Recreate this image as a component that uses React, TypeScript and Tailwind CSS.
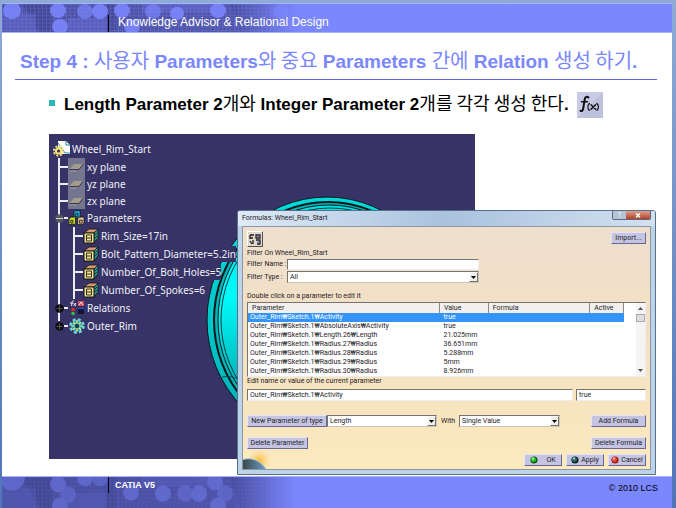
import type { ReactNode } from 'react';
import { clsx } from 'clsx';

const planes = ['xy plane', 'yz plane', 'zx plane'];

const treeParameters = [
  'Rim_Size=17in',
  'Bolt_Pattern_Diameter=5.2in',
  'Number_Of_Bolt_Holes=5',
  'Number_Of_Spokes=6',
];

const formulaRows = [
  { name: 'Outer_Rim₩Sketch.1₩Activity', value: 'true' },
  { name: 'Outer_Rim₩Sketch.1₩AbsoluteAxis₩Activity', value: 'true' },
  { name: 'Outer_Rim₩Sketch.1₩Length.26₩Length', value: '21.025mm' },
  { name: 'Outer_Rim₩Sketch.1₩Radius.27₩Radius', value: '36.651mm' },
  { name: 'Outer_Rim₩Sketch.1₩Radius.28₩Radius', value: '5.288mm' },
  { name: 'Outer_Rim₩Sketch.1₩Radius.29₩Radius', value: '5mm' },
  { name: 'Outer_Rim₩Sketch.1₩Radius.30₩Radius', value: '8.926mm' },
];

// Dots over the banner, shared by the header and the footer
const headerDots = [
  [10, 7, 9], [56, 7, 8], [83, 8, 8], [98, 8, 8], [120, 7, 8], [151, 8, 8],
  [175, 10, 7], [216, 7, 8], [279, 8, 8], [58, 24, 8], [130, 24, 8],
];
const footerDots = [
  [10, 0, 13], [56, 7, 8], [66, 17, 8], [58, 28, 8], [83, 1, 8], [98, 1, 8],
  [129, 15, 8], [161, 16, 8], [183, 16, 8], [197, 16, 8], [213, 5, 8], [223, 16, 8], [216, 28, 8],
];

function Banner({ id, dots, base, dot }: { id: string; dots: number[][]; base: string; dot: string }) {
  return (
    <svg className="absolute inset-y-0 left-0 h-full w-[320px]" viewBox="0 0 320 30" preserveAspectRatio="none" aria-hidden="true">
      <defs>
        <linearGradient id={`${id}-fade`}>
          <stop offset="0" stopColor="#fff" />
          <stop offset="0.72" stopColor="#fff" stopOpacity="0.9" />
          <stop offset="0.92" stopColor="#fff" stopOpacity="0" />
        </linearGradient>
        <pattern id={`${id}-grid`} width="4" height="4" patternUnits="userSpaceOnUse">
          <path d="M0 .5H4M.5 0V4" stroke={dot} strokeOpacity="0.25" />
        </pattern>
        <mask id={`${id}-mask`}>
          <rect width="320" height="30" fill={`url(#${id}-fade)`} />
        </mask>
      </defs>
      <g mask={`url(#${id}-mask)`}>
        <rect width="320" height="30" fill={base} />
        <path d="M20 0h30v30h-12zM104 0h10v30h-10zM228 0h40v30h-30z" fill="#3f438a" fillOpacity="0.6" />
        <path d="M0 10h34v20h-34zM66 15h38v15h-38zM140 0h70v9h-70z" fill={dot} fillOpacity="0.25" />
        <rect width="320" height="30" fill={`url(#${id}-grid)`} />
        {dots.map(([x, y, r], i) => (
          <circle key={i} cx={x} cy={y} r={r} fill={dot} fillOpacity={i % 3 === 2 ? 0.7 : 0.9} />
        ))}
      </g>
    </svg>
  );
}

function FormulaIcon() {
  return (
    <svg className="h-[26px] w-[26px] shrink-0" viewBox="0 0 26 26" role="img" aria-label="Formula">
      <rect width="26" height="26" fill="#c9cbe6" />
      <path d="M0 26 26 0V26z" fill="#b8bad8" fillOpacity="0.6" />
      <g fill="none" stroke="#111" strokeLinecap="round">
        <path d="M11.500 5.400C10 4 8.200 4.800 7.800 7L6.200 16.500c-.4 2.200-1.400 3-2.700 2.300" strokeWidth="2" />
        <path d="M4.500 9.700h6" strokeWidth="1.500" />
        <path d="M12.300 11.500c-1.800 2-1.800 5 0 6.800M20 11.500c1.800 2 1.800 5 0 6.800" strokeWidth="1.300" />
        <path d="M14 12.700l4.600 4.600M18.600 12.700l-4.600 4.600" strokeWidth="1.500" />
      </g>
    </svg>
  );
}

function PlaneIcon() {
  return (
    <svg className="h-[17px] w-[17px] shrink-0" viewBox="0 0 17 17" aria-hidden="true">
      <rect width="17" height="17" fill="#74758f" />
      <path d="M6 6h9l-4 5H1.500z" fill="#a39b8c" />
      <path d="M1.500 11.500H11L15 6.500" fill="none" stroke="#3c3846" />
      <path d="M2 13h7" stroke="#9b97a5" />
    </svg>
  );
}

function ParameterIcon() {
  return (
    <svg className="h-4 w-4 shrink-0" viewBox="0 0 16 16" aria-hidden="true">
      <path d="M1 5 6 1h9l-4 4z" fill="#d19a72" stroke="#17120c" strokeWidth="0.800" />
      <path d="M11 5l4-4v9l-4 5z" fill="#23979b" stroke="#17120c" strokeWidth="0.800" />
      <rect x="1" y="5" width="10" height="10" fill="#efe39a" stroke="#17120c" />
      <path d="M3.500 7h5v6h-5zM3.500 10h5M12 7l2-2M12 10l2-2" fill="none" stroke="#3b3314" />
    </svg>
  );
}

function ParametersIcon() {
  return (
    <svg className="h-4 w-4 shrink-0" viewBox="0 0 17 16" aria-hidden="true">
      <g stroke="#101018" strokeWidth="0.800">
        <path d="M5 2l2-2h5v6l-1 2H5z" fill="#1f9ec9" />
        <path d="M0 9l2-2h5v6l-1 2H0z" fill="#c8d22c" />
        <path d="M9 9l2-2h5v6l-1 2H9z" fill="#e1bb92" />
      </g>
      <path d="M6.500 3.500h3v3h-3zM2 10.500h2v3H2zM11 10.500h3v3h-3z" fill="none" stroke="#26301a" />
    </svg>
  );
}

function RelationsIcon() {
  return (
    <svg className="h-4 w-4 shrink-0" viewBox="0 0 16 16" aria-hidden="true">
      <path d="M5 1C3 0 3 3 2.500 6M1 3h3M4.500 3l2.500 3M7 3 4.500 6" fill="none" stroke="#eee" />
      <rect x="9" y="1" width="6" height="5" fill="#d84a58" />
      <path d="M10 5l2-3 2 3" fill="none" stroke="#eee" />
      <circle cx="4" cy="9.500" r="1.800" fill="#e62d20" />
      <circle cx="4" cy="13.500" r="1.800" fill="#20c83c" />
      <rect x="9" y="8" width="6" height="6" fill="#14142c" />
      <path d="M9 8.500h6" stroke="#2c52ee" />
    </svg>
  );
}

function GearIcon() {
  return (
    <svg className="h-4 w-4 shrink-0" viewBox="0 0 16 16" aria-hidden="true">
      <circle cx="8" cy="8" r="6.300" fill="none" stroke="#67d9df" strokeWidth="3" strokeDasharray="2.800 2.150" />
      <circle cx="8" cy="8" r="5.200" fill="#2aa8b1" />
      <path d="M8 2v12M2 8h12M4 4l8 8M12 4l-8 8" stroke="#e4e878" strokeWidth="1.200" />
      <circle cx="8" cy="8" r="2.300" fill="#123d5c" />
    </svg>
  );
}

function RootIcon() {
  return (
    <svg className="h-[18px] w-[18px] shrink-0" viewBox="0 0 18 18" aria-hidden="true">
      <path d="M5 1h8l4 4v9H5z" fill="#fff" />
      <path d="M13 1v4h4M5 3l7 10h5" fill="none" stroke="#1b8b9c" />
      <circle cx="5.500" cy="11" r="4.600" fill="none" stroke="#f4e07a" strokeWidth="2" strokeDasharray="2 1.600" />
      <circle cx="5.500" cy="11" r="3.600" fill="#f2e07a" />
      <circle cx="5.500" cy="11" r="1.500" fill="#33245a" />
    </svg>
  );
}

function Knob({ plus }: { plus?: boolean }) {
  return (
    <svg className="h-[9px] w-[9px] shrink-0" viewBox="0 0 9 9" aria-hidden="true">
      <circle cx="4.500" cy="4.500" r="4.300" fill={plus ? '#0c0c10' : '#55565e'} />
      <path d={plus ? 'M1.500 4.500h6M4.500 1.500v6' : 'M1 4.500h7'} stroke={plus ? '#555' : '#d4d4d4'} />
    </svg>
  );
}

function TreeRow({ icon, label, className }: { icon: ReactNode; label: string; className: string }) {
  return (
    <li className={clsx('flex items-center', className)}>
      <span className="w-2 border-t-2 border-white/90" />
      {icon}
      <span className="bg-[#373366] pl-0.5 leading-4">{label}</span>
    </li>
  );
}

function BranchRow({ icon, label, plus }: { icon: ReactNode; label: string; plus?: boolean }) {
  return (
    <div className="-ml-[5px] flex h-[18px] items-center">
      <Knob plus={plus} />
      <span className="mr-px w-1 border-t-2 border-white/90" />
      {icon}
      <span className="pl-0.5">{label}</span>
    </div>
  );
}

function SpecTree() {
  return (
    <div className="relative w-fit pt-1.5 pl-1 font-['Noto_Sans','Open_Sans',sans-serif] text-[10px] whitespace-nowrap text-[#f0f0f6]">
      <div className="flex h-[18px] items-center gap-px">
        <RootIcon />
        <span>Wheel_Rim_Start</span>
      </div>
      <ul className="ml-[5px] border-l-2 border-white/90">
        {planes.map((plane) => (
          <TreeRow key={plane} icon={<PlaneIcon />} label={plane} className="h-[17px]" />
        ))}
        <li>
          <BranchRow icon={<ParametersIcon />} label="Parameters" />
          <ul className="ml-[13px] border-l-2 border-white/90">
            {treeParameters.map((label) => (
              <TreeRow key={label} icon={<ParameterIcon />} label={label} className="h-[18px]" />
            ))}
          </ul>
        </li>
        <li className="pb-1">
          <BranchRow icon={<RelationsIcon />} label="Relations" plus />
        </li>
      </ul>
      <div className="-mt-1 ml-[7px]">
        <BranchRow icon={<GearIcon />} label="Outer_Rim" plus />
      </div>
    </div>
  );
}

function WheelRim() {
  return (
    <svg className="absolute top-0 left-0 h-[325px] w-[426px]" viewBox="0 0 426 325" aria-hidden="true">
      <defs>
        <linearGradient id="rim-face" x2="0" y2="1">
          <stop offset="0" stopColor="#00dfe2" />
          <stop offset="0.400" stopColor="#00fafa" />
          <stop offset="0.900" stopColor="#009da2" />
        </linearGradient>
        <linearGradient id="rim-edge" x2="0" y2="1">
          <stop offset="0" stopColor="#00d8d8" />
          <stop offset="0.500" stopColor="#00c8cb" />
          <stop offset="1" stopColor="#00aaad" />
        </linearGradient>
      </defs>
      <ellipse cx="278" cy="186" rx="120" ry="123" fill="url(#rim-edge)" stroke="#04181c" />
      <ellipse cx="279" cy="186" rx="114" ry="118" fill="#00b4b7" stroke="#04181c" strokeWidth="2" />
      <ellipse cx="280" cy="186" rx="111" ry="115" fill="url(#rim-face)" stroke="#04181c" />
      <ellipse cx="281" cy="186" rx="109" ry="112" fill="none" stroke="#063b40" />
      <path d="M169 245c7-4 13-3 20 0" fill="none" stroke="#04484c" />
    </svg>
  );
}

function DialogButton({ children, className }: { children: ReactNode; className?: string }) {
  return (
    <button
      type="button"
      className={clsx(
        'flex h-3 items-center justify-center border border-t-[#e4e4f6] border-r-[#686894] border-b-[#686894] border-l-[#e4e4f6] bg-[#c5c5e3] whitespace-nowrap',
        className,
      )}
    >
      {children}
    </button>
  );
}

function DropDown({ id, value, label, className }: { id: string; value: string; label?: string; className?: string }) {
  return (
    <div className={clsx('relative h-3', className)}>
      <select
        id={id}
        aria-label={label}
        className="block h-full w-full appearance-none border border-t-[#77746d] border-r-[#c9c5bb] border-b-[#c9c5bb] border-l-[#77746d] bg-white pl-0.5"
        defaultValue={value}
      >
        <option>{value}</option>
      </select>
      <span className="pointer-events-none absolute inset-y-px right-px flex w-[9px] items-center justify-center border border-t-white border-r-[#77746d] border-b-[#77746d] border-l-white bg-[#f0eee8]">
        <svg className="h-[3px] w-[5px]" viewBox="0 0 5 3" aria-hidden="true">
          <path d="M0 0h5L2.500 3z" fill="#000" />
        </svg>
      </span>
    </div>
  );
}

function Lamp({ light, dark }: { light: string; dark: string }) {
  return (
    <svg className="h-2 w-2" viewBox="0 0 8 8" aria-hidden="true">
      <circle cx="4" cy="4" r="3.600" fill={dark} />
      <circle cx="3.500" cy="3.500" r="2.500" fill={light} />
      <circle cx="3" cy="2.500" r="1" fill="#fff" fillOpacity="0.800" />
    </svg>
  );
}

const field = 'border border-t-[#77746d] border-r-[#eee] border-b-[#eee] border-l-[#77746d] bg-white pl-0.5';

function FormulasDialog() {
  return (
    <section
      aria-label="Formulas: Wheel_Rim_Start"
      className="absolute top-[76px] left-[188px] z-10 w-[419px] rounded-t-[3px] border border-[#58708a] bg-[#bdd3ea] px-1 pb-1 font-['Roboto','Noto_Sans',sans-serif] text-[7px] leading-[9px] text-[#26221f]"
    >
      <header className="-mx-1 flex h-[15px] items-start justify-between rounded-t-[2px] bg-linear-to-r from-[#dfeaf6] via-[#a9c2de] to-[#d3e1f0] pr-1 pl-1">
        <h2 className="pt-[3px]">Formulas: Wheel_Rim_Start</h2>
        <div className="flex h-[9px] overflow-hidden rounded-b-[2px] border border-t-0 border-[#596b80]">
          <button type="button" aria-label="Help" className="flex w-[13px] items-center justify-center bg-[#b4c4d6] text-white">
            ?
          </button>
          <button type="button" aria-label="Close" className="flex w-[24px] items-center justify-center bg-linear-to-b from-[#d9a090] to-[#b53c22]">
            <svg className="h-[5px] w-[6px]" viewBox="0 0 6 5" aria-hidden="true">
              <path d="M1 .5l4 4M5 .5l-4 4" stroke="#fff" strokeWidth="1.400" />
            </svg>
          </button>
        </div>
      </header>

      <div className="relative border border-[#8b97a3] bg-linear-to-b from-[#eedfce] via-[#f3e0c4] via-40% to-[#fce9bd] px-1 pt-1 pb-[3px]">
        <svg className="absolute bottom-0 left-0 h-[18px] w-[30px]" viewBox="0 0 30 18" aria-hidden="true">
          <defs>
            <radialGradient id="sun">
              <stop offset="0" stopColor="#f9b52c" />
              <stop offset="1" stopColor="#fbd98a" stopOpacity="0" />
            </radialGradient>
            <linearGradient id="globe">
              <stop offset="0" stopColor="#3a4a4c" />
              <stop offset="1" stopColor="#6d9cc0" />
            </linearGradient>
          </defs>
          <circle cx="16" cy="10" r="12" fill="url(#sun)" />
          <path d="M0 8.500C8 6 17 9 23 18H0z" fill="url(#globe)" />
          <path d="M0 8.500C8 6 17 9 23 18" fill="none" stroke="#a8cce0" />
        </svg>

        <div className="flex items-start justify-between">
          <button type="button" aria-label="Incremental" className="h-4 w-4 border border-t-white border-r-[#55524c] border-b-[#55524c] border-l-white bg-[#ded7ca]">
            <svg viewBox="0 0 14 14" aria-hidden="true">
              <path d="M2 3h4M2 3v4M2 6h3M8 3h4v3H8zM2 9l2 3M5 8v4M8 8h4v4H9" fill="none" stroke="#222" strokeWidth="1.300" />
              <path d="M8 4h4M9 10h3" stroke="#4b4ba4" />
            </svg>
          </button>
          <DialogButton className="mt-px w-[35px]">Import...</DialogButton>
        </div>
        <p className="mt-0.5">Filter On Wheel_Rim_Start</p>
        <div className="mt-px flex items-center whitespace-nowrap">
          <label htmlFor="filter-name" className="w-10">Filter Name :</label>
          <input id="filter-name" className={clsx(field, 'h-[11px] w-[48%]')} />
        </div>
        <div className="mt-px flex items-center whitespace-nowrap">
          <label htmlFor="filter-type" className="w-10">Filter Type :</label>
          <DropDown id="filter-type" value="All" className="w-[48%]" />
        </div>

        <p className="mt-[9px]">Double click on a parameter to edit it</p>
        <div className="mt-px flex border border-t-[#77746d] border-r-[#eee] border-b-[#eee] border-l-[#77746d] bg-white">
          <table className="min-w-0 flex-1 table-fixed border-collapse text-left">
            <colgroup>
              <col className="w-[51%]" />
              <col className="w-[13%]" />
              <col className="w-[27%]" />
              <col />
            </colgroup>
            <thead>
              <tr className="h-[10px] bg-[#f1f0ee]">
                <th className="border-r border-[#8a8a8a] p-0 pl-1 font-normal">Parameter</th>
                <th className="border-r border-[#8a8a8a] p-0 pl-1 font-normal">Value</th>
                <th className="border-r border-[#8a8a8a] p-0 pl-1 font-normal">Formula</th>
                <th className="border-r border-[#8a8a8a] p-0 pl-1 font-normal">Active</th>
              </tr>
            </thead>
            <tbody>
              {formulaRows.map((row, i) => (
                <tr key={row.name} className={clsx('h-[9px] whitespace-nowrap', i === 0 && 'bg-[#3394f8] text-white')}>
                  <td className="p-0 pl-0.5">{row.name}</td>
                  <td className="p-0 pl-1">{row.value}</td>
                  <td className="p-0" />
                  <td className="p-0" />
                </tr>
              ))}
            </tbody>
          </table>
          <div className="ml-3 flex w-[9px] flex-col items-center justify-between bg-[#f4f4f4] py-1">
            <svg className="h-[3px] w-[5px]" viewBox="0 0 5 3" aria-hidden="true">
              <path d="M0 3h5L2.500 0z" fill="#555" />
            </svg>
            <span className="mt-1 mb-auto h-2 w-full border border-[#aaa] bg-[#dedede]" />
            <svg className="h-[3px] w-[5px]" viewBox="0 0 5 3" aria-hidden="true">
              <path d="M0 0h5L2.500 3z" fill="#555" />
            </svg>
          </div>
        </div>

        <p>
          <label htmlFor="edit-name">Edit name or value of the current parameter</label>
        </p>
        <div className="mt-[3px] flex gap-[3px]">
          <input id="edit-name" defaultValue="Outer_Rim₩Sketch.1₩Activity" className={clsx(field, 'h-3 min-w-0 flex-1')} />
          <input aria-label="Value" defaultValue="true" className={clsx(field, 'h-3 w-[70px]')} />
        </div>

        <div className="mt-[14px] flex items-center">
          <DialogButton className="w-20">New Parameter of type</DialogButton>
          <DropDown id="type" value="Length" label="Parameter type" className="w-[110px]" />
          <label htmlFor="with" className="mx-1">With</label>
          <DropDown id="with" value="Single Value" className="w-[101px]" />
          <DialogButton className="ml-auto w-[55px]">Add Formula</DialogButton>
        </div>
        <div className="mt-[10px] flex justify-between">
          <DialogButton className="w-[61px]">Delete Parameter</DialogButton>
          <DialogButton className="w-[55px]">Delete Formula</DialogButton>
        </div>
        <div className="mt-[5px] flex justify-end gap-1">
          <DialogButton className="w-[38px] gap-2">
            <Lamp light="#2fc22f" dark="#0b5c10" />
            OK
          </DialogButton>
          <DialogButton className="w-[38px] gap-0.5">
            <Lamp light="#2d6a62" dark="#0a2320" />
            Apply
          </DialogButton>
          <DialogButton className="w-[38px] gap-0.5">
            <Lamp light="#f04a34" dark="#9b1610" />
            Cancel
          </DialogButton>
        </div>
      </div>
    </section>
  );
}

function Ko({ children, className }: { children: ReactNode; className: string }) {
  return <span className={clsx("font-['Noto_Sans_CJK_KR',sans-serif] font-normal", className)}>{children}</span>;
}

export default function App() {
  return (
    <div className="flex min-h-screen flex-col bg-linear-to-b from-[#8eabd6] to-[#4f74b8] pt-[3px] pr-1 pl-0.5 font-['Liberation_Sans','Noto_Sans_CJK_KR',sans-serif]">
      <header className="relative flex h-[30px] items-end border-y border-[#a9b2ff] bg-[#7b87fd]">
        <Banner id="top" dots={headerDots} base="#4c51a0" dot="#7b85fb" />
        <div className="relative ml-[106px] border-l border-black pb-[3px] pl-[9px] text-[12px] leading-[14px] text-white">
          Knowledge Advisor &amp; Relational Design
        </div>
      </header>

      <main className="flex-1 bg-white">
        <h1 className="mr-[15px] ml-[13px] border-b border-[#6265d8] pt-[17px] pb-[5px] pl-[5px] text-[19px] leading-6 font-bold whitespace-nowrap text-[#7b87fd]">
          Step 4 : <Ko className="text-[20px] leading-4">사용자</Ko> Parameters
          <Ko className="text-[20px] leading-4">와 중요</Ko> Parameters <Ko className="text-[20px] leading-4">간에</Ko> Relation{' '}
          <Ko className="text-[20px] leading-4">생성 하기</Ko>.
        </h1>
        <div className="mt-3 ml-[47px] flex h-[26px] items-center text-[17px] leading-6 font-bold whitespace-nowrap text-black">
          <span className="mr-[9px] mb-1 h-1.5 w-1.5 bg-[#2cb5b5]" />
          <p>
            Length Parameter 2<Ko className="text-[18px] leading-4">개와</Ko> Integer Parameter 2
            <Ko className="text-[18px] leading-4">개를 각각 생성 한다</Ko>.
          </p>
          <span className="ml-2">
            <FormulaIcon />
          </span>
        </div>

        <div className="relative mt-4 mb-[17px] ml-[47px] h-[325px] w-[426px] bg-[#373366]">
          <WheelRim />
          <SpecTree />
          <FormulasDialog />
        </div>
      </main>

      <footer className="relative flex h-8 items-start justify-between border-t border-[#a9b2ff] bg-[#7b87fd] leading-4">
        <Banner id="bottom" dots={footerDots} base="#474c9c" dot="#6169cc" />
        <div className="relative ml-[106px] border-l border-black pl-1.5 text-[9px] font-bold text-white">CATIA V5</div>
        <div className="relative mt-[3px] mr-[14px] text-[9px] text-black">© 2010 LCS</div>
      </footer>
    </div>
  );
}
